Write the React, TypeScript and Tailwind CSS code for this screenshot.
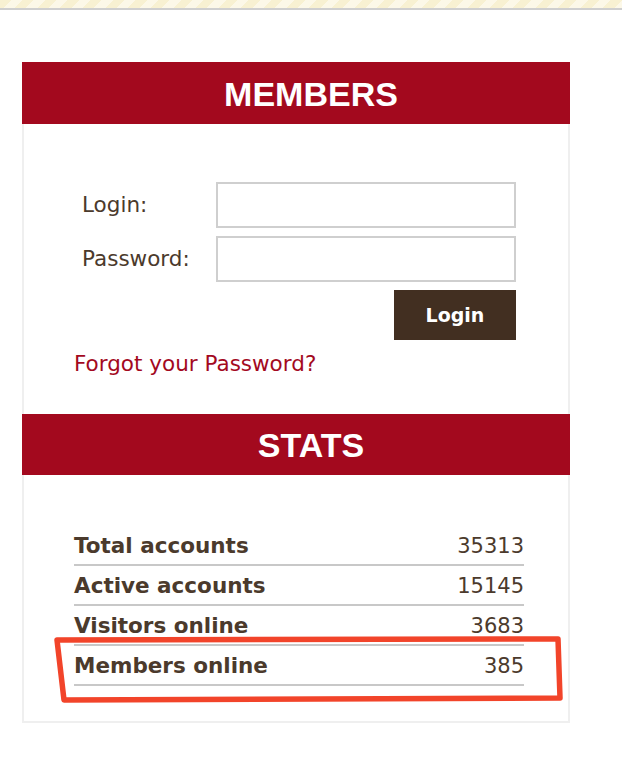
import React from "react";

const font = { fontFamily: '"DejaVu Sans", Tahoma, Verdana, sans-serif' };
const arial = { fontFamily: '"Liberation Sans", Arial, sans-serif' };

export default function App() {
  const stats: [string, string][] = [
    ["Total accounts", "35313"],
    ["Active accounts", "15145"],
    ["Visitors online", "3683"],
    ["Members online", "385"],
  ];
  return (
    <div className="relative min-h-[760px] w-[622px] bg-white" style={font}>
      <div className="h-[8px] bg-[repeating-linear-gradient(135deg,#f8f1d2_0px,#f8f1d2_8px,#fcf8e8_8px,#fcf8e8_16px)]" />
      <div className="h-[2px] bg-[#cfcfcf]" />
      <div className="ml-[22px] mt-[52px] w-[548px]">
        <div className="flex h-[62px] items-center justify-center bg-[#a3091e] pl-[30px] pt-[2px]">
          <span className="text-[34px] font-bold text-white" style={arial}>
            MEMBERS
          </span>
        </div>
        <div className="border-x-2 border-[#efefef] pb-[34px] pt-[58px]">
          <div className="flex flex-col gap-[8px] pl-[58px]">
            <div className="flex items-center">
              <span className="w-[134px] text-[21.5px] text-[#4b3a2c]">Login:</span>
              <input className="h-[46px] w-[300px] border-2 border-[#cfcfcf] bg-white" />
            </div>
            <div className="flex items-center">
              <span className="w-[134px] text-[21.5px] text-[#4b3a2c]">Password:</span>
              <input type="password" className="h-[46px] w-[300px] border-2 border-[#cfcfcf] bg-white" />
            </div>
            <div className="flex justify-end pr-[52px]">
              <button className="h-[50px] w-[122px] bg-[#422f21] text-[19px] font-bold text-white">
                Login
              </button>
            </div>
          </div>
          <div className="mt-[8px] pl-[50px] text-[21.5px] text-[#a3091e]">Forgot your Password?</div>
        </div>
        <div className="flex h-[61px] items-center justify-center bg-[#a3091e] pl-[30px] pt-[2px]">
          <span className="text-[34px] font-bold text-white" style={arial}>
            STATS
          </span>
        </div>
        <div className="border-x-2 border-b-2 border-[#efefef] pb-[35px] pl-[50px] pr-[44px] pt-[51px]">
          {stats.map(([k, v]) => (
            <div key={k} className="flex h-[40px] items-center justify-between border-b-2 border-[#c8c8c8] pt-[2px] text-[#4b3a2c]">
              <span className="text-[21.5px] font-bold">{k}</span>
              <span className="text-[21px]">{v}</span>
            </div>
          ))}
        </div>
      </div>
      <svg className="pointer-events-none absolute left-[52px] top-[634px]" width="514" height="70" viewBox="0 0 514 70">
        <path d="M5 6 L506 5 L508 64 L12 66 Z" fill="none" stroke="#f2442a" strokeWidth="5.5" strokeLinejoin="round" />
      </svg>
    </div>
  );
}
